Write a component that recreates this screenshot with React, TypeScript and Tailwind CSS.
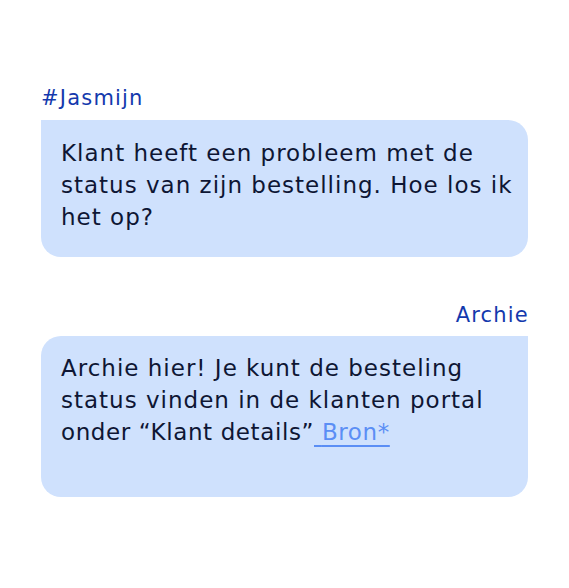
export default function App() {
  return (
    <div className="w-[569px] h-[588px] bg-white px-[41px] pt-[84px] font-['DejaVu_Sans',sans-serif]">
      <div className="text-[21px] leading-[28px] tracking-[1.2px] text-[#1439ad]">#Jasmijn</div>
      <div className="mt-[8px] h-[137px] rounded-[20px] rounded-tl-none bg-[#cfe1fd] pl-[20px] pr-[12px] pt-[17px] text-[23px] leading-[32px] tracking-[1px] text-[#0e1634]">
        Klant heeft een probleem met de
        <br />
        status van zijn bestelling. Hoe los ik
        <br />
        het op?
      </div>
      <div className="mt-[44px] -mr-[1px] text-right text-[21px] leading-[28px] tracking-[1.2px] text-[#1439ad]">Archie</div>
      <div className="mt-[7px] h-[161px] rounded-[20px] rounded-tr-none bg-[#cfe1fd] pl-[20px] pr-[12px] pt-[16px] text-[23px] leading-[32px] tracking-[1px] text-[#0e1634]">
        Archie hier! Je kunt de besteling
        <br />
        status vinden in de klanten portal
        <br />
        <span className="tracking-[0.6px]">onder “Klant details”</span>
        <a href="#" className="tracking-[0.6px] text-[#5b8ef5] underline decoration-[1.5px] underline-offset-[5px]">
          {' '}Bron*
        </a>
      </div>
    </div>
  )
}
